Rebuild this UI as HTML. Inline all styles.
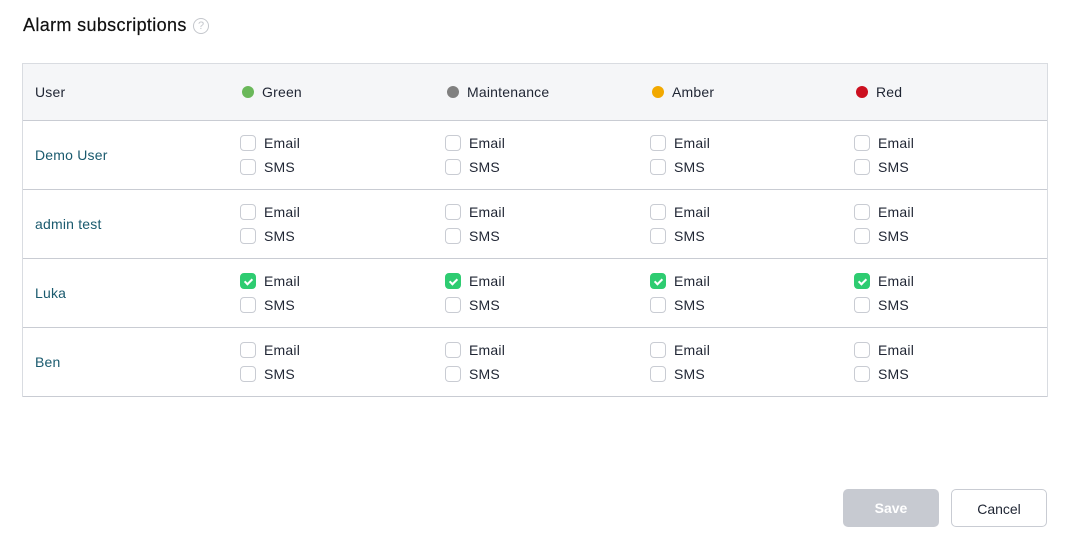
<!DOCTYPE html>
<html><head><style>
*{box-sizing:border-box;margin:0;padding:0}
body{width:1073px;height:560px;background:#fff;font-family:"Liberation Sans",sans-serif;color:#1f2533;position:relative;overflow:hidden}
h1{position:absolute;left:23px;top:15px;font-size:18px;font-weight:normal;color:#111;letter-spacing:0.35px;-webkit-text-stroke:0.2px #111}
.help{position:absolute;left:193px;top:18px;width:16px;height:16px;border:1px solid #c4c7cc;border-radius:50%;color:#c4c7cc;font-size:11px;text-align:center;line-height:14px}
.tbl{position:absolute;left:22px;top:63px;width:1026px;height:334px;border:1px solid #d9dce1}
.hdr{position:absolute;left:0;top:0;width:1024px;height:57px;background:#f5f6f8;border-bottom:1px solid #c9ccd3}
.row{position:absolute;left:0;width:1024px;height:69px;border-bottom:1px solid #c9ccd3}
.t{position:absolute;font-size:14px;line-height:16px;letter-spacing:0.2px}
.dot{position:absolute;width:12px;height:12px;border-radius:50%}
.cb{position:absolute;width:16px;height:16px;border:1px solid #c9ccd3;border-radius:4px;background:#fff}
.cb.on{background:#2ecc71;border-color:#2ecc71}
.cb.on::after{content:"";position:absolute;left:5px;top:3px;width:3px;height:6px;border:solid #fff;border-width:0 2px 2px 0;transform:rotate(45deg)}
.u{color:#1a5a6e}
.btn{position:absolute;top:489px;width:96px;height:38px;border-radius:5px;font-size:14px;text-align:center;line-height:38px}
</style></head><body>
<h1>Alarm subscriptions</h1><div class="help">?</div>
<div class="tbl">
<div class="hdr">
<div class="t" style="left:12px;top:20px">User</div>
<div class="dot" style="left:219px;top:22px;background:#6ab85a"></div><div class="t" style="left:239px;top:20px">Green</div>
<div class="dot" style="left:424px;top:22px;background:#808080"></div><div class="t" style="left:444px;top:20px">Maintenance</div>
<div class="dot" style="left:629px;top:22px;background:#f2a900"></div><div class="t" style="left:649px;top:20px">Amber</div>
<div class="dot" style="left:833px;top:22px;background:#cc1020"></div><div class="t" style="left:853px;top:20px">Red</div>
</div>
<div id="rows"></div>
</div>
<div class="btn" style="left:843px;background:#c7cad1;color:#fff;font-weight:bold">Save</div>
<div class="btn" style="left:951px;border:1px solid #c9ccd3;color:#1f2533">Cancel</div>
<script>
var names=["Demo User","admin test","Luka","Ben"],xs=[217,422,627,831],h="";
names.forEach(function(n,i){
 h+='<div class="row" style="top:'+(57+i*69)+'px"><div class="t u" style="left:12px;top:26px">'+n+'</div>';
 xs.forEach(function(x){
  h+='<div class="cb'+(i==2?' on':'')+'" style="left:'+x+'px;top:14px"></div><div class="t" style="left:'+(x+24)+'px;top:14px">Email</div>';
  h+='<div class="cb" style="left:'+x+'px;top:38px"></div><div class="t" style="left:'+(x+24)+'px;top:38px">SMS</div>';
 });
 h+='</div>';
});
document.getElementById('rows').innerHTML=h;
</script>
</body></html>
